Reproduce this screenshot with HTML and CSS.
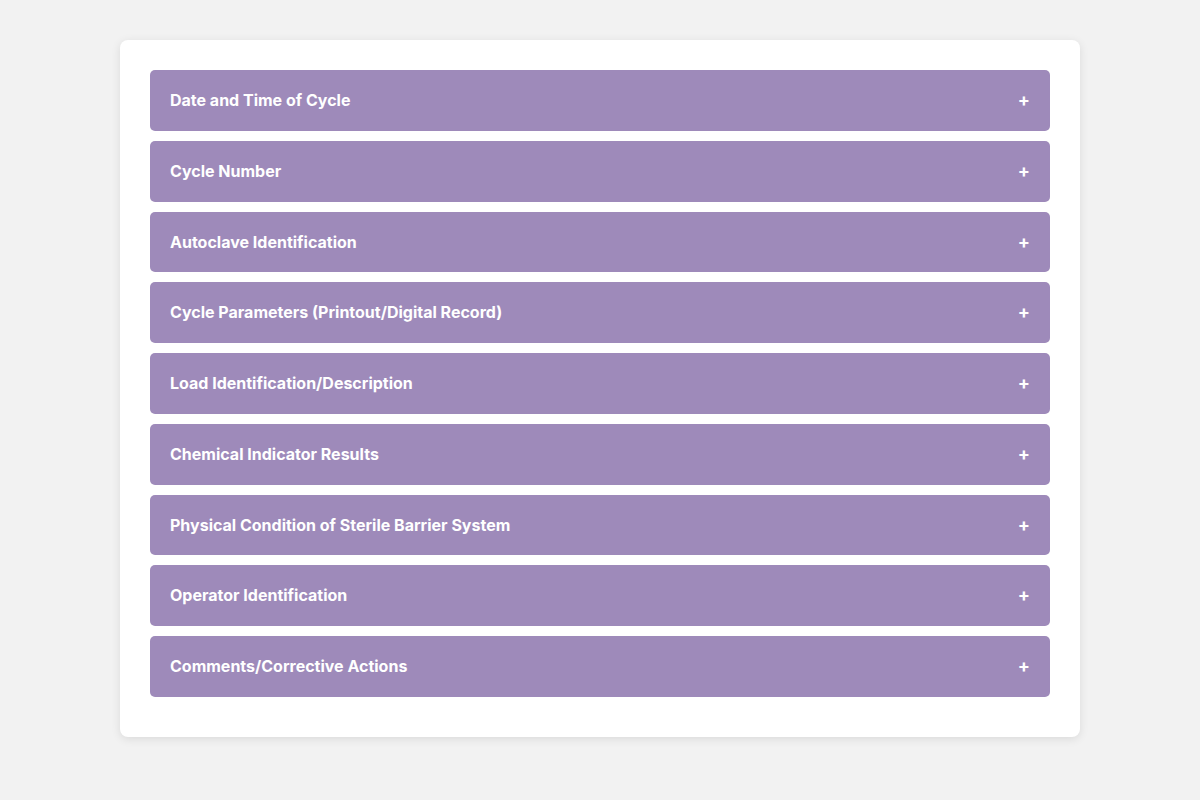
FILE: index.html
```html
<!DOCTYPE html>
<html>
<head>
<meta charset="utf-8">
<link rel="stylesheet" href="styles.css">
</head>
<body>
<div class="card">
  <div class="item"><span class="title">Date and Time of Cycle</span><span class="plus">+</span></div>
  <div class="item"><span class="title">Cycle Number</span><span class="plus">+</span></div>
  <div class="item"><span class="title">Autoclave Identification</span><span class="plus">+</span></div>
  <div class="item"><span class="title">Cycle Parameters (Printout/Digital Record)</span><span class="plus">+</span></div>
  <div class="item"><span class="title">Load Identification/Description</span><span class="plus">+</span></div>
  <div class="item"><span class="title">Chemical Indicator Results</span><span class="plus">+</span></div>
  <div class="item"><span class="title">Physical Condition of Sterile Barrier System</span><span class="plus">+</span></div>
  <div class="item"><span class="title">Operator Identification</span><span class="plus">+</span></div>
  <div class="item"><span class="title">Comments/Corrective Actions</span><span class="plus">+</span></div>
</div>
</body>
</html>
```
FILE: styles.css
```css
html, body {
  margin: 0;
  padding: 0;
}
body {
  background: #f2f2f2;
  font-family: Inter, "Liberation Sans", sans-serif;
  padding: 40px 0;
}
.card {
  width: 900px;
  margin: 0 auto;
  background: #ffffff;
  border-radius: 8px;
  padding: 30px;
  box-shadow: 0 2px 10px rgba(0, 0, 0, 0.1);
  display: flex;
  flex-direction: column;
}
.item {
  background: #9e8aba;
  color: #ffffff;
  border-radius: 5px;
  padding: 20px;
  margin-bottom: 10px;
  display: flex;
  justify-content: space-between;
  align-items: center;
  font-size: 16px;
  font-weight: 700;
  line-height: 20.75px;
}
.plus {
  font-size: 18px;
  font-weight: 700;
}
```
